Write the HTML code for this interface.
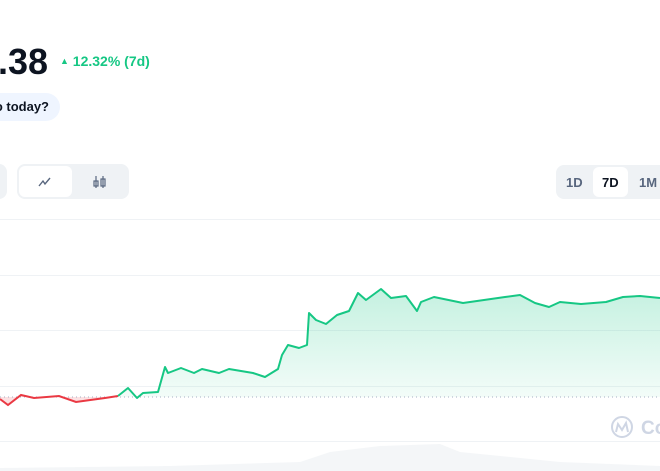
<!DOCTYPE html>
<html><head><meta charset="utf-8"><style>
*{margin:0;padding:0;box-sizing:border-box}
body{width:660px;height:471px;overflow:hidden;background:#fff;font-family:"Liberation Sans",sans-serif;position:relative}
.big{position:absolute;right:612px;top:41px;font-size:36px;font-weight:700;color:#0d1421;white-space:nowrap}
.chg{position:absolute;left:60px;top:53px;font-size:14px;font-weight:700;color:#16c784}
.pill{position:absolute;left:-20px;top:93px;width:80px;height:28px;border-radius:14px;background:#eff5ff;font-size:13px;font-weight:700;color:#0d1421;line-height:28px;text-align:right;padding-right:11px}
.grp{position:absolute;background:#eff2f5;border-radius:8px}
.sel{position:absolute;background:#fff;border-radius:6px}
.t{position:absolute;font-size:13px;font-weight:700;color:#58667e}
</style></head><body>
<div class="big">5.38</div>
<div class="chg"><span style="font-size:9px;position:relative;top:-2px">▲</span> 12.32% (7d)</div>
<div class="pill">o today?</div>
<div class="grp" style="left:-20px;top:164px;width:27px;height:35px"></div>
<div class="grp" style="left:17px;top:164px;width:112px;height:35px"></div>
<div class="sel" style="left:19px;top:166px;width:53px;height:31px"></div>
<svg style="position:absolute;left:38px;top:176px" width="14" height="12"><path d="M1 10 L5 5 L7 8 L12 2" fill="none" stroke="#58667e" stroke-width="1.4"/></svg>
<svg style="position:absolute;left:92px;top:174px" width="16" height="16"><line x1="4" y1="2" x2="4" y2="14" stroke="#58667e" stroke-width="1.2"/><rect x="2" y="7" width="4" height="5" fill="none" stroke="#58667e" stroke-width="1.2"/><line x1="11" y1="2" x2="11" y2="14" stroke="#58667e" stroke-width="1.2"/><rect x="9" y="5" width="4" height="7" fill="none" stroke="#58667e" stroke-width="1.2"/></svg>
<div class="grp" style="left:556px;top:165px;width:120px;height:34px"></div>
<div class="sel" style="left:593px;top:167px;width:35px;height:30px"></div>
<div class="t" style="left:566px;top:175px">1D</div>
<div class="t" style="left:602px;top:175px;color:#0d1421">7D</div>
<div class="t" style="left:639px;top:175px">1M</div>
<svg style="position:absolute;left:0;top:210px" width="660" height="261">
<defs><linearGradient id="g" x1="0" y1="0" x2="0" y2="1"><stop offset="0" stop-color="#16c784" stop-opacity=".25"/><stop offset="1" stop-color="#16c784" stop-opacity=".05"/></linearGradient></defs>
<g stroke="#eff2f5" stroke-width="1"><line x1="0" y1="9.5" x2="660" y2="9.5"/><line x1="0" y1="65.5" x2="660" y2="65.5"/><line x1="0" y1="120.5" x2="660" y2="120.5"/><line x1="0" y1="176.5" x2="660" y2="176.5"/><line x1="0" y1="231.5" x2="660" y2="231.5"/></g>
<g transform="translate(0,-210)">
<path d="M120 397 L128 388 L137 398 L143 393 L158 392 L165 367 L168 373 L181 368 L194 373 L202 369 L219 373 L229 369 L253 373 L265 377 L278 369 L282 355 L288 345 L299 348 L307 345 L309 313 L316 320 L326 324 L337 315 L349 311 L358 293 L366 300 L381 289 L391 298 L406 296 L417 311 L421 302 L434 297 L463 303 L505 297 L520 295 L535 303 L549 307 L560 302 L581 304 L606 302 L623 297 L640 296 L660 298 L660 397 Z" fill="url(#g)"/>
<path d="M0 397 L0 399 L8 405 L21 395 L34 398 L59 396 L76 402 L105 398 L116 396 L116 397 Z" fill="#ea3943" fill-opacity=".15"/>
<line x1="0" y1="397" x2="660" y2="397" stroke="#a6b0c3" stroke-width="1" stroke-dasharray="1,3"/>
<path d="M0 399 L8 405 L21 395 L34 398 L59 396 L76 402 L105 398 L118 396" fill="none" stroke="#ea3943" stroke-width="2"/>
<path d="M118 396 L128 388 L137 398 L143 393 L158 392 L165 367 L168 373 L181 368 L194 373 L202 369 L219 373 L229 369 L253 373 L265 377 L278 369 L282 355 L288 345 L299 348 L307 345 L309 313 L316 320 L326 324 L337 315 L349 311 L358 293 L366 300 L381 289 L391 298 L406 296 L417 311 L421 302 L434 297 L463 303 L505 297 L520 295 L535 303 L549 307 L560 302 L581 304 L606 302 L623 297 L640 296 L660 298" fill="none" stroke="#16c784" stroke-width="2" stroke-linejoin="round"/>
<path d="M0 471 L0 468 L170 466 L300 462 L330 452 L380 446 L440 444 L460 452 L560 462 L660 466 L660 471 Z" fill="#eff2f5" fill-opacity=".7"/>
<circle cx="622" cy="427" r="10" fill="none" stroke="#cfd6e4" stroke-width="2"/>
<path d="M616 432 L618 424 L622 430 L626 423 L628 432" fill="none" stroke="#cfd6e4" stroke-width="2"/>
<text x="641" y="434" font-family="Liberation Sans" font-size="19" font-weight="700" fill="#cfd6e4">Co</text>
</g>
</svg>
</body></html>
